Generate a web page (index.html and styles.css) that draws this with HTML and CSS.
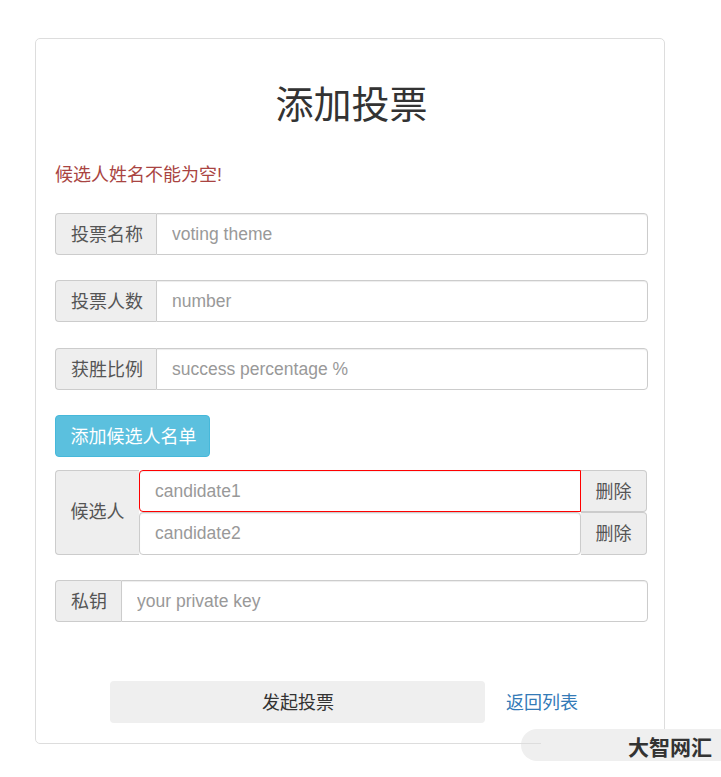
FILE: index.html
```html
<!DOCTYPE html>
<html lang="zh-CN">
<head>
<meta charset="utf-8">
<title>添加投票</title>
<link rel="stylesheet" href="styles.css">
</head>
<body>
<main class="card">
  <h1 class="title">添加投票</h1>
  <p class="error">候选人姓名不能为空!</p>
  <form class="form">
    <div class="group">
      <span class="addon">投票名称</span>
      <input class="control" placeholder="voting theme">
    </div>
    <div class="group">
      <span class="addon">投票人数</span>
      <input class="control" placeholder="number">
    </div>
    <div class="group">
      <span class="addon">获胜比例</span>
      <input class="control" placeholder="success percentage %">
    </div>
    <button type="button" class="btn-info">添加候选人名单</button>
    <div class="candidates">
      <span class="addon candidates-label">候选人</span>
      <div class="candidate-rows">
        <div class="candidate-row">
          <input class="control candidate invalid" placeholder="candidate1">
          <button type="button" class="remove">删除</button>
        </div>
        <div class="candidate-row">
          <input class="control candidate" placeholder="candidate2">
          <button type="button" class="remove">删除</button>
        </div>
      </div>
    </div>
    <div class="group">
      <span class="addon addon-short">私钥</span>
      <input class="control" placeholder="your private key">
    </div>
    <div class="actions">
      <button type="button" class="submit">发起投票</button>
      <a class="back" href="#">返回列表</a>
    </div>
  </form>
</main>
<div class="badge">大智网汇</div>
</body>
</html>
```
FILE: styles.css
```css
* { box-sizing: border-box; }
html { background: #fff; }
html, body { margin: 0; padding: 0; }
body {
  height: 777px;
  overflow: hidden;
  position: relative;
  font-family: "Liberation Sans", "Noto Sans CJK SC", sans-serif;
  font-size: 18px;
  color: #555;
}
.card {
  width: 630px;
  height: 706px;
  margin: 38px 0 0 35px;
  padding: 0 16px 0 19px;
  border: 1px solid #ddd;
  border-radius: 5px;
}
.title {
  margin: 37px 0 0;
  height: 58px;
  line-height: 58px;
  font-size: 38px;
  font-weight: 400;
  text-align: center;
  color: #333;
}
.error {
  margin: 28px 0 0;
  height: 26px;
  line-height: 26px;
  color: #a94442;
}
.form { margin-top: 25px; }
.group {
  display: flex;
  height: 42px;
  margin-bottom: 25.4px;
}
.addon {
  display: flex;
  align-items: center;
  justify-content: center;
  flex: none;
  padding: 0 13px 2px 15px;
  background: #eee;
  border: 1px solid #ccc;
  border-right: 0;
  border-radius: 4px 0 0 4px;
  white-space: nowrap;
}
.addon-short { padding-right: 14px; }
.control {
  flex: 1;
  min-width: 0;
  height: 100%;
  padding: 1px 15px 0;
  font: inherit;
  font-size: 17.5px;
  color: #555;
  background: #fff;
  border: 1px solid #ccc;
  border-radius: 0 4px 4px 0;
  outline: 0;
  box-shadow: inset 0 1px 1px rgba(0, 0, 0, .075);
}
.control::placeholder { color: #999; opacity: 1; }
.btn-info {
  display: block;
  width: 155px;
  height: 42px;
  padding: 0 0 3px 2px;
  font: inherit;
  color: #fff;
  background: #5bc0de;
  border: 1px solid #46b8da;
  border-radius: 4px;
}
.candidates {
  display: flex;
  width: 592px;
  height: 85px;
  margin: 12.8px 0 25px;
}
.candidates-label { width: 84px; padding: 0 0 4px; }
.candidate-rows {
  flex: 1;
  min-width: 0;
  display: grid;
  grid-template-rows: 42px 43px;
}
.candidate-row { display: flex; }
.candidate { border-radius: 4px; }
.invalid { border-color: #f00; border-radius: 4px 0 0 4px; }
.remove {
  flex: none;
  width: 66px;
  padding: 0 0 2px;
  font: inherit;
  color: #555;
  background: #eee;
  border: 1px solid #ccc;
  border-left: 0;
  border-radius: 0 4px 4px 0;
}
.actions {
  display: flex;
  align-items: center;
  height: 42px;
  margin-top: 59px;
  padding-left: 55px;
}
.submit {
  width: 375px;
  height: 42px;
  padding: 0 0 2px 1px;
  font: inherit;
  color: #333;
  background: #efefef;
  border: 0;
  border-radius: 4px;
}
.back {
  margin: 0 0 2px 21px;
  color: #337ab7;
  text-decoration: none;
}
.badge {
  position: absolute;
  left: 541px;
  top: 729px;
  width: 180px;
  height: 32px;
  padding-right: 9px;
  background: #efefef;
  text-align: right;
  font-size: 21px;
  font-weight: 700;
  line-height: 38px;
  color: #333;
}
.badge::before {
  content: "";
  position: absolute;
  z-index: -1;
  left: -20px;
  top: 0;
  width: 40px;
  height: 32px;
  background: #efefef;
  border-radius: 16px 0 0 16px;
}
```
